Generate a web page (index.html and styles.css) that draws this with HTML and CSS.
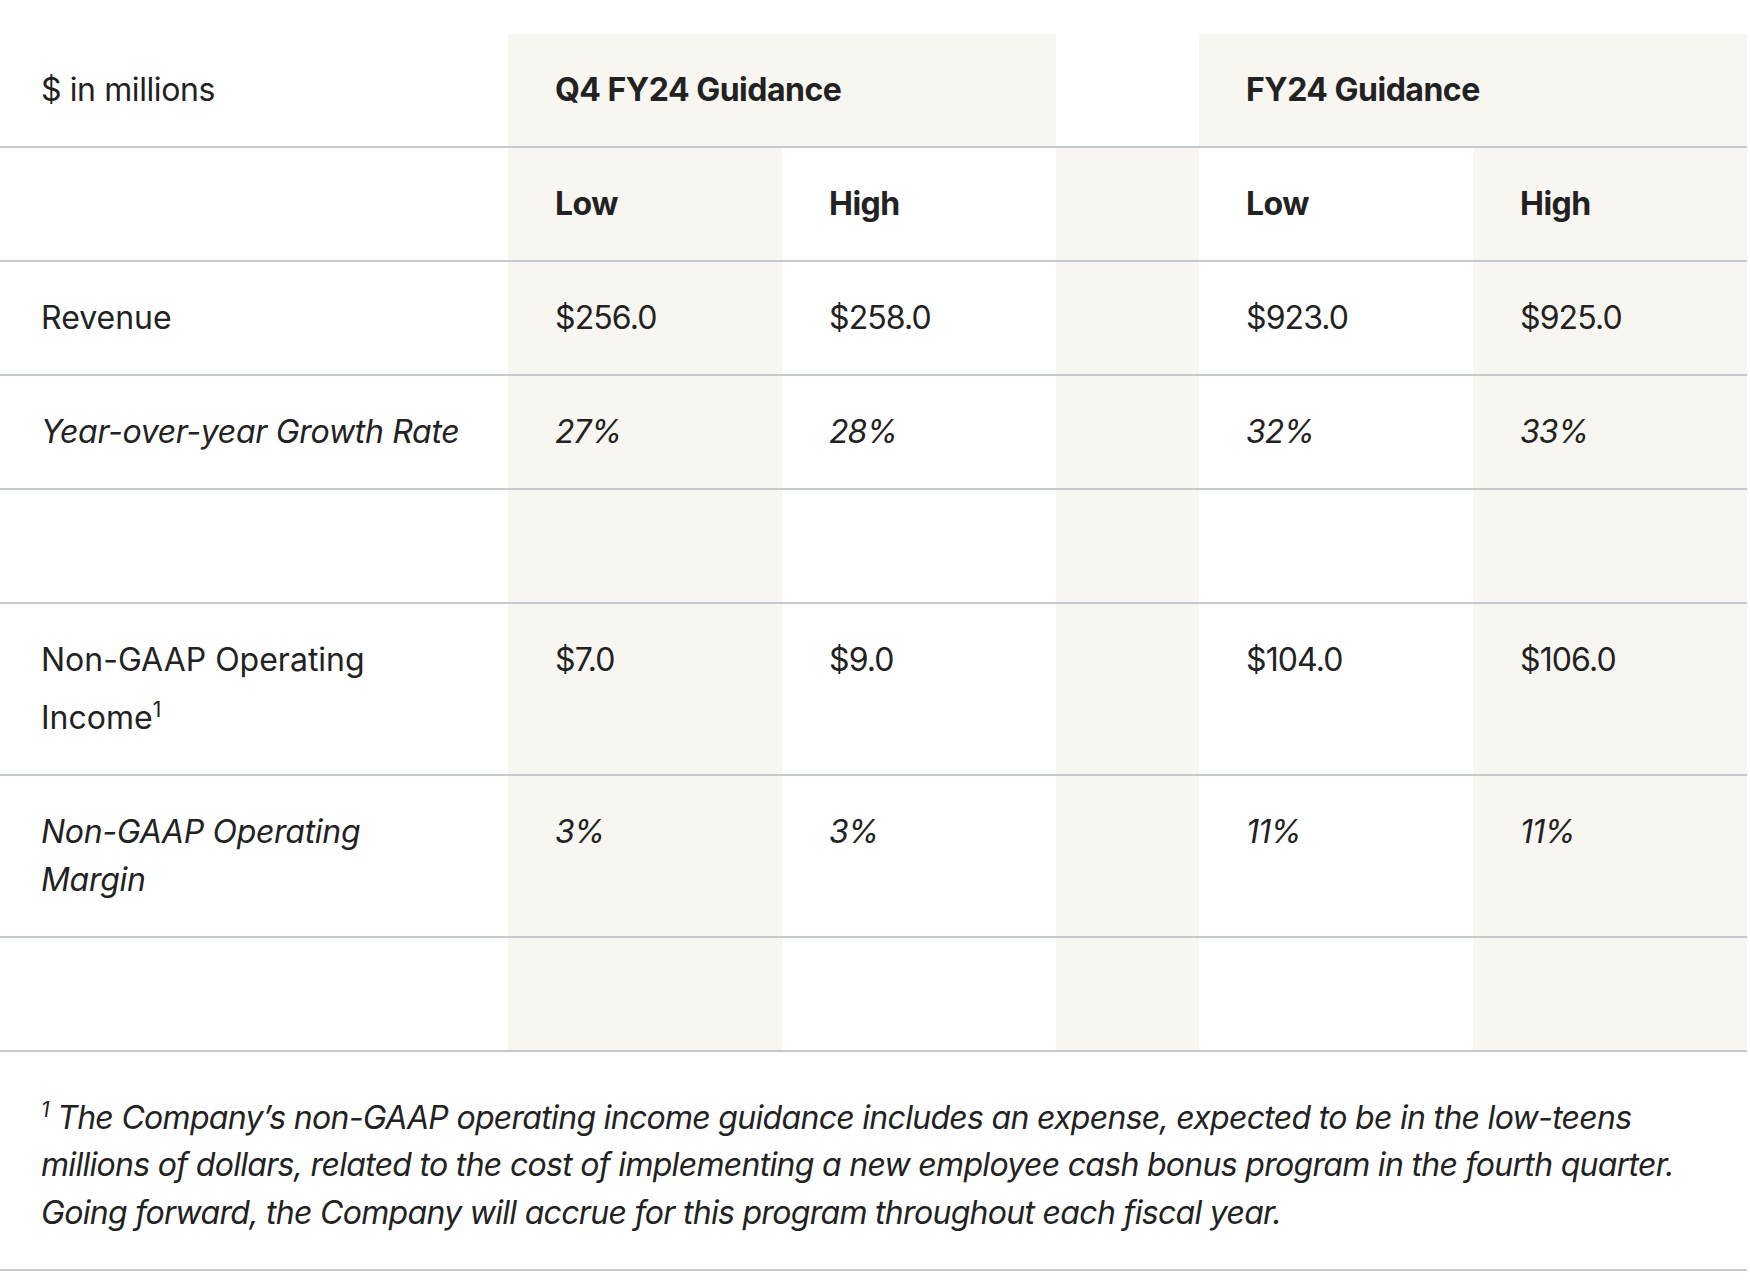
FILE: index.html
```html
<!DOCTYPE html>
<html lang="en">
<head>
<meta charset="utf-8">
<title>Guidance</title>
<link rel="stylesheet" href="styles.css">
</head>
<body>
<table class="guidance">
  <colgroup>
    <col class="col-label">
    <col class="col-val">
    <col class="col-val">
    <col class="col-gap">
    <col class="col-val">
    <col class="col-val">
  </colgroup>
  <thead>
    <tr>
      <th class="label plain">$ in millions</th>
      <th class="group shade" colspan="2">Q4 FY24 Guidance</th>
      <th class="gap">&nbsp;</th>
      <th class="group shade" colspan="2">FY24 Guidance</th>
    </tr>
    <tr>
      <th class="label">&nbsp;</th>
      <th class="shade">Low</th>
      <th>High</th>
      <th class="shade">&nbsp;</th>
      <th>Low</th>
      <th class="shade">High</th>
    </tr>
  </thead>
  <tbody>
    <tr>
      <td class="label">Revenue</td>
      <td class="val shade">$256.0</td>
      <td class="val">$258.0</td>
      <td class="val shade">&nbsp;</td>
      <td class="val">$923.0</td>
      <td class="val shade">$925.0</td>
    </tr>
    <tr class="italic">
      <td class="label">Year-over-year Growth Rate</td>
      <td class="val shade">27%</td>
      <td class="val">28%</td>
      <td class="val shade">&nbsp;</td>
      <td class="val">32%</td>
      <td class="val shade">33%</td>
    </tr>
    <tr>
      <td class="label">&nbsp;</td>
      <td class="val shade">&nbsp;</td>
      <td class="val">&nbsp;</td>
      <td class="val shade">&nbsp;</td>
      <td class="val">&nbsp;</td>
      <td class="val shade">&nbsp;</td>
    </tr>
    <tr>
      <td class="label">Non-GAAP Operating Income<sup>1</sup></td>
      <td class="val shade">$7.0</td>
      <td class="val">$9.0</td>
      <td class="val shade">&nbsp;</td>
      <td class="val">$104.0</td>
      <td class="val shade">$106.0</td>
    </tr>
    <tr class="italic">
      <td class="label">Non-GAAP Operating Margin</td>
      <td class="val shade">3%</td>
      <td class="val">3%</td>
      <td class="val shade">&nbsp;</td>
      <td class="val">11%</td>
      <td class="val shade">11%</td>
    </tr>
    <tr>
      <td class="label">&nbsp;</td>
      <td class="val shade">&nbsp;</td>
      <td class="val">&nbsp;</td>
      <td class="val shade">&nbsp;</td>
      <td class="val">&nbsp;</td>
      <td class="val shade">&nbsp;</td>
    </tr>
  </tbody>
  <tfoot>
    <tr>
      <td class="footnote" colspan="6"><sup>1</sup> The Company’s non-GAAP operating income guidance includes an expense, expected to be in the low-teens millions of dollars, related to the cost of implementing a new employee cash bonus program in the fourth quarter. Going forward, the Company will accrue for this program throughout each fiscal year.</td>
    </tr>
  </tfoot>
</table>
</body>
</html>
```

FILE: styles.css
```css
html, body {
  margin: 0;
  padding: 0;
  background: #ffffff;
}

body {
  font-family: Inter, "Liberation Sans", sans-serif;
  color: #222222;
  font-size: 32px;
  line-height: 48px;
}

.guidance {
  width: 1746px;
  margin-top: 34px;
  border-collapse: collapse;
  table-layout: fixed;
}

.col-label { width: 508px; }
.col-val { width: 274px; }
.col-gap { width: 143px; }

.guidance th,
.guidance td {
  padding: 32px 46px 32px 47px;
  text-align: left;
  vertical-align: top;
  font-weight: 400;
}

.guidance thead th {
  font-weight: 700;
  letter-spacing: -0.5px;
}

.guidance thead th.plain {
  font-weight: 400;
  letter-spacing: -0.4px;
}

.guidance tr {
  border-bottom: 2px solid #c4c8cf;
}

.guidance .label {
  padding-left: 41px;
  padding-right: 43px;
}

.guidance .val {
  letter-spacing: -0.9px;
}

.guidance .shade {
  background: #f8f6f0;
}

.guidance .italic td {
  font-style: italic;
}

.guidance .italic .label {
  letter-spacing: -0.3px;
}

.guidance sup {
  font-size: 21px;
  line-height: 52px;
  vertical-align: super;
}

.guidance .footnote {
  padding: 32px 41px;
  font-style: italic;
  letter-spacing: -0.7px;
}
```
